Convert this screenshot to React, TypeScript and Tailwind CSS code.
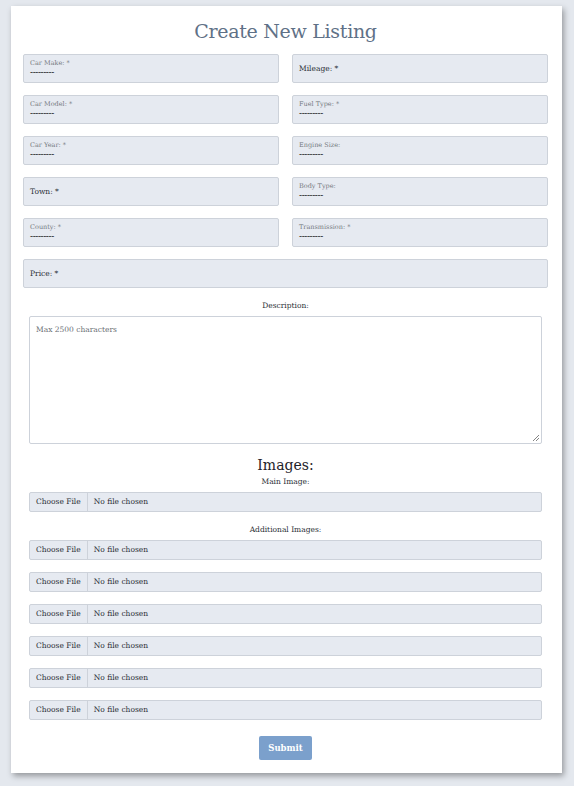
import React from 'react'

const serif = { fontFamily: '"DejaVu Serif", "Liberation Serif", serif' }

type Field = { label: string; select?: boolean; full?: boolean }

const FIELDS: Field[] = [
  { label: 'Car Make: *', select: true },
  { label: 'Mileage: *' },
  { label: 'Car Model: *', select: true },
  { label: 'Fuel Type: *', select: true },
  { label: 'Car Year: *', select: true },
  { label: 'Engine Size:', select: true },
  { label: 'Town: *' },
  { label: 'Body Type:', select: true },
  { label: 'County: *', select: true },
  { label: 'Transmission: *', select: true },
  { label: 'Price: *', full: true },
]

function FormField({ f }: { f: Field }) {
  return (
    <div
      className={
        'h-[29px] bg-[#e6eaf1] border border-[#cdd2da] rounded-[2px] px-[6px] ' +
        (f.full ? 'col-span-2 ' : '') +
        (f.select ? 'flex flex-col justify-start pt-[4px]' : 'flex items-center')
      }
    >
      {f.select ? (
        <>
          <span className="text-[6.5px] leading-[9px] text-[#75797f]">{f.label}</span>
          <span className="text-[9px] leading-[9px] text-[#111] tracking-[-0.4px]">---------</span>
        </>
      ) : (
        <span className="text-[7.5px] leading-[10px] text-[#2b2f36]">{f.label}</span>
      )}
    </div>
  )
}

function FileInput() {
  return (
    <div className="h-[20px] bg-[#e6eaf1] border border-[#cdd2da] rounded-[2px] flex items-center text-[7.5px] leading-[10px] text-[#2b2f36]">
      <span className="h-full flex items-center px-[6px] border-r border-[#cdd2da]">Choose File</span>
      <span className="px-[6px]">No file chosen</span>
    </div>
  )
}

export default function App() {
  return (
    <div className="min-h-[786px] bg-[#e4e8ee] pt-[6px] pl-[11px] pr-[12px] pb-[13px]" style={serif}>
      <div className="bg-white w-[551px] h-[767px] shadow-[2px_3px_6px_rgba(0,0,0,0.35)] pl-[12px] pr-[14px]">
        <h1 className="text-center text-[19px] leading-[20px] pt-[15px] text-[#5f7187] tracking-[-0.3px]">
          Create New Listing
        </h1>
        <div className="grid grid-cols-2 gap-x-[13px] gap-y-[12px] mt-[13px]">
          {FIELDS.map(f => (
            <FormField key={f.label} f={f} />
          ))}
        </div>
        <div className="px-[6px]">
          <p className="text-center text-[7.5px] text-[#2b2f36] mt-[13px] leading-[10px]">Description:</p>
          <div className="relative mt-[5px] h-[128px] border border-[#cdd2da] rounded-[2px] px-[6px] pt-[5px] leading-[10px]">
            <span className="text-[7.5px] leading-[10px] text-[#6b6f75]">Max 2500 characters</span>
            <svg className="absolute right-[1px] bottom-[1px]" width="8" height="8" viewBox="0 0 8 8">
              <path d="M7 1 L1 7 M7 4 L4 7" stroke="#666" strokeWidth="0.8" />
            </svg>
          </div>
          <h2 className="text-center text-[14px] leading-[18px] text-[#1f2329] mt-[12px]">Images:</h2>
          <p className="text-center text-[7.5px] text-[#2b2f36] leading-[10px] mt-[3px]">Main Image:</p>
          <div className="mt-[5px]">
            <FileInput />
          </div>
          <p className="text-center text-[7.5px] text-[#2b2f36] leading-[10px] mt-[13px]">Additional Images:</p>
          <div className="mt-[5px] flex flex-col gap-[12px]">
            {[0, 1, 2, 3, 4, 5].map(i => (
              <FileInput key={i} />
            ))}
          </div>
          <div className="flex justify-center mt-[16px]">
            <button className="w-[53px] h-[24px] bg-[#7ba0cc] rounded-[2px] text-white text-[8.5px] font-bold">
              Submit
            </button>
          </div>
        </div>
      </div>
    </div>
  )
}
